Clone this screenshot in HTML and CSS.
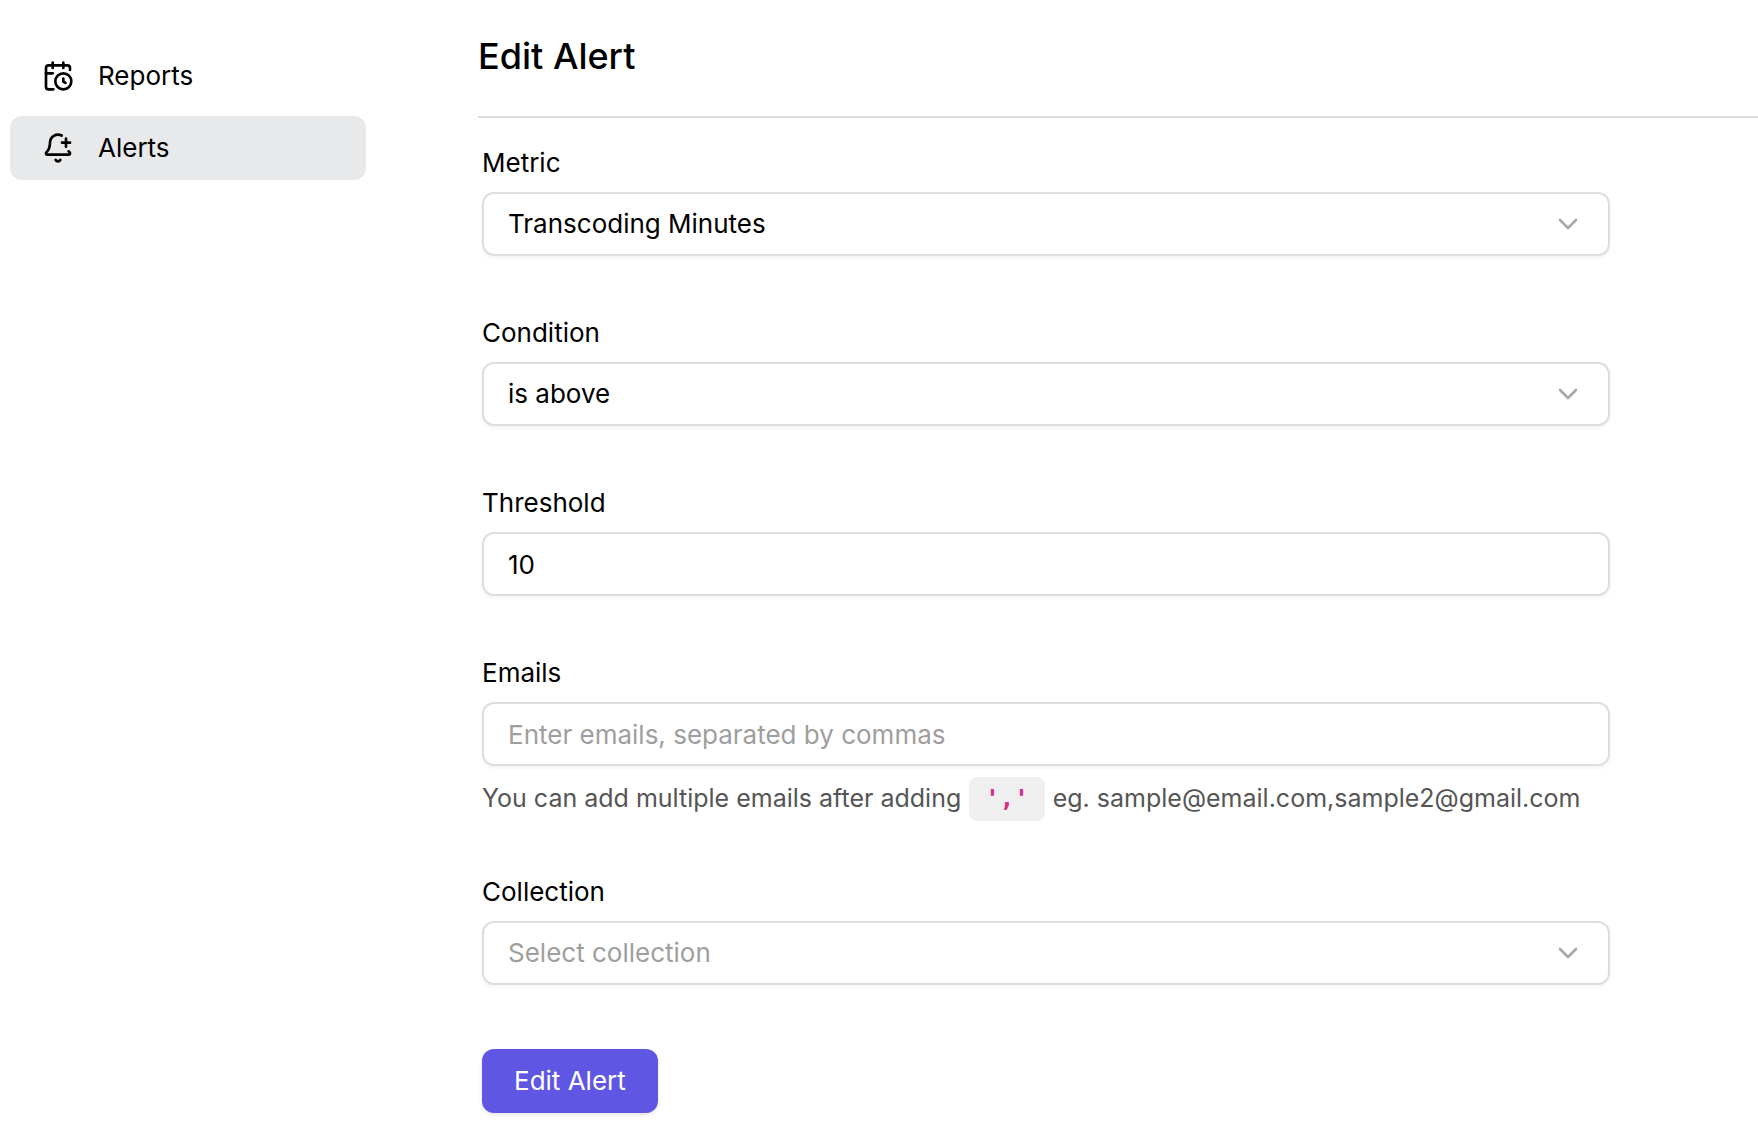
FILE: index.html
```html
<!DOCTYPE html>
<html lang="en">
<head>
    <meta charset="UTF-8">
    <meta name="viewport" content="width=device-width, initial-scale=1.0">
    <title>Edit Alert</title>
    <link rel="stylesheet" href="styles.css">
</head>
<body>
    <div class="layout">
        <nav class="sidebar">
            <a class="nav-item" href="#reports">
                <svg class="icon" viewBox="0 0 24 24" aria-hidden="true">
                    <path d="M16 14v2.2l1.6 1"/>
                    <path d="M16 2v4"/>
                    <path d="M21 7.5V6a2 2 0 0 0-2-2H5a2 2 0 0 0-2 2v14a2 2 0 0 0 2 2h3.5"/>
                    <path d="M3 10h5"/>
                    <path d="M8 2v4"/>
                    <circle cx="16" cy="16" r="6"/>
                </svg>
                Reports
            </a>
            <a class="nav-item active" href="#alerts" aria-current="page">
                <svg class="icon" viewBox="0 0 24 24" aria-hidden="true">
                    <path d="M10.268 21a2 2 0 0 0 3.464 0"/>
                    <path d="M15 8h6"/>
                    <path d="M18 5v6"/>
                    <path d="M20.002 14.464a9 9 0 0 0 .738.863A1 1 0 0 1 20 17H4a1 1 0 0 1-.74-1.673C4.59 13.956 6 12.499 6 8a6 6 0 0 1 8.75-5.332"/>
                </svg>
                Alerts
            </a>
        </nav>

        <main class="content">
            <header class="page-header">
                <h1>Edit Alert</h1>
            </header>

            <form class="alert-form">
                <div class="field">
                    <label for="metric">Metric</label>
                    <div class="select-wrap">
                        <select id="metric" class="control">
                            <option>Transcoding Minutes</option>
                        </select>
                        <svg class="icon chevron" viewBox="0 0 24 24" aria-hidden="true"><path d="m6 9 6 6 6-6"/></svg>
                    </div>
                </div>

                <div class="field">
                    <label for="condition">Condition</label>
                    <div class="select-wrap">
                        <select id="condition" class="control">
                            <option>is above</option>
                            <option>is below</option>
                        </select>
                        <svg class="icon chevron" viewBox="0 0 24 24" aria-hidden="true"><path d="m6 9 6 6 6-6"/></svg>
                    </div>
                </div>

                <div class="field">
                    <label for="threshold">Threshold</label>
                    <input id="threshold" class="control" type="text" inputmode="numeric" value="10">
                </div>

                <div class="field">
                    <label for="emails">Emails</label>
                    <input id="emails" class="control" type="text" placeholder="Enter emails, separated by commas" aria-describedby="emails-help">
                    <p id="emails-help" class="help">You can add multiple emails after adding <code>','</code> eg. sample@email.com,sample2@gmail.com</p>
                </div>

                <div class="field">
                    <label for="collection">Collection</label>
                    <div class="select-wrap">
                        <select id="collection" class="control" required>
                            <option value="" disabled selected>Select collection</option>
                        </select>
                        <svg class="icon chevron" viewBox="0 0 24 24" aria-hidden="true"><path d="m6 9 6 6 6-6"/></svg>
                    </div>
                </div>

                <button class="submit" type="button">Edit Alert</button>
            </form>
        </main>
    </div>
</body>
</html>
```

FILE: styles.css
```css
* {
    box-sizing: border-box;
}
body {
    margin: 0;
    background: #fff;
    color: #000;
    font-family: Inter, sans-serif;
    font-size: 26px;
    line-height: 26px;
}
.layout {
    display: grid;
    grid-template-columns: 356px minmax(0, 1fr);
    gap: 112px;
    padding-left: 10px;
}

/* sidebar */
.sidebar {
    display: flex;
    flex-direction: column;
    gap: 8px;
    padding-top: 44px;
}
.nav-item {
    display: flex;
    align-items: center;
    gap: 24px;
    height: 64px;
    padding: 0 32px;
    border-radius: 12px;
    color: inherit;
    text-decoration: none;
}
.nav-item.active {
    background: #e8e9eb;
}
.icon {
    flex: none;
    width: 32px;
    height: 32px;
    fill: none;
    stroke: currentColor;
    stroke-width: 2;
    stroke-linecap: round;
    stroke-linejoin: round;
}

/* header */
.page-header {
    padding: 34px 0 38px;
    border-bottom: 2px solid #dedede;
}
h1 {
    margin: 0;
    font-size: 36px;
    font-weight: 500;
    line-height: 44px;
}

/* form */
.alert-form {
    display: flex;
    flex-direction: column;
    align-items: flex-start;
    gap: 64px;
    max-width: 1132px;
    padding: 32px 0 32px 4px;
}
.field {
    display: flex;
    flex-direction: column;
    width: 100%;
}
.field label {
    margin-bottom: 16px;
}
.control {
    width: 100%;
    height: 64px;
    margin: 0;
    padding: 0 24px;
    border: 2px solid #dedede;
    border-radius: 12px;
    background: #fff;
    box-shadow: 0 2px 4px rgba(0, 0, 0, 0.05);
    color: #000;
    font: inherit;
    line-height: 34px;
    appearance: none;
}
.control::placeholder,
select.control:invalid {
    color: #9e9e9e;
    opacity: 1;
}
.select-wrap {
    display: grid;
    align-items: center;
}
.select-wrap > * {
    grid-area: 1 / 1;
}
.chevron {
    justify-self: end;
    margin-right: 26px;
    color: #a8a8a8;
    pointer-events: none;
}
.help {
    margin: 15px 0 0;
    color: #555;
    font-size: 25px;
    line-height: 34px;
}
.help code {
    margin: 0 1px;
    padding: 8px 16px;
    border-radius: 8px;
    background: #efefef;
    color: #db2c83;
    font-family: "DejaVu Sans Mono", monospace;
    font-size: 24px;
    font-weight: 700;
    line-height: 24px;
}
.submit {
    height: 64px;
    padding: 0 32px;
    border: 0;
    border-radius: 12px;
    background: #5f57e3;
    box-shadow: 0 2px 4px rgba(0, 0, 0, 0.1);
    color: #fff;
    font: inherit;
    cursor: pointer;
}
```
